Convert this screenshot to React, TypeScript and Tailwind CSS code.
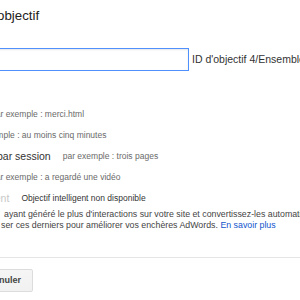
export default function App() {
  return (
    <div className="w-[300px] h-[300px] overflow-hidden bg-white font-['Liberation_Sans',Arial,sans-serif] text-[#333]">
      {/* page heading, cut by the left edge */}
      <div className="mt-[8px] leading-[16px] text-[13.3px] text-[#222] whitespace-nowrap">
        <span className="-ml-[3px] inline-block">objectif</span>
      </div>

      {/* goal name input + goal id */}
      <div className="mt-[24px] flex items-center whitespace-nowrap">
        <div className="-ml-[10px] shrink-0 w-[199px] h-[23px] border border-[#4d90fe] bg-white shadow-[inset_0_1px_2px_rgba(0,0,0,0.1)]" />
        <span className="ml-[3px] shrink-0 text-[10.5px] text-[#333]">ID d'objectif 4/Ensemble d'objectifs 1</span>
      </div>

      {/* goal types */}
      <div className="mt-[33px] text-[8.5px] whitespace-nowrap">
        <div className="h-[21px] flex items-center text-[#6a6a6a]">
          <span className="-ml-[9px]">par exemple : merci.html</span>
        </div>
        <div className="h-[21px] flex items-center text-[#6a6a6a]">
          <span className="-ml-[32px]">par exemple : au moins cinq minutes</span>
        </div>
        <div className="h-[21px] flex items-center">
          <span className="-ml-[3px] text-[10.5px] text-[#333]">par session</span>
          <span className="ml-[12px] text-[#6a6a6a]">par exemple : trois pages</span>
        </div>
        <div className="h-[21px] flex items-center text-[#6a6a6a]">
          <span className="-ml-[9px]">par exemple : a regardé une vidéo</span>
        </div>
        <div className="h-[21px] flex items-center">
          <span className="-ml-[35px] text-[10.5px] text-[#c8c8c8]">intelligent</span>
          <span className="ml-[12px] text-[#333]">Objectif intelligent non disponible</span>
        </div>
      </div>

      <div className="text-[8.8px] leading-[11px] text-[#444] whitespace-nowrap">
        <div className="ml-[4px]">ayant généré le plus d'interactions sur votre site et convertissez-les automatiquement</div>
        <div className="ml-[1px]">
          ser ces derniers pour améliorer vos enchères AdWords.{' '}
          <span className="text-[#15c]">En savoir plus</span>
        </div>
      </div>

      <div className="mt-[26px] border-t border-[#e5e5e5]" />

      <div className="mt-[11px] flex">
        <button className="-ml-[25px] h-[23px] px-[11px] rounded-[2px] border border-[#dcdcdc] bg-gradient-to-b from-[#f5f5f5] to-[#f1f1f1] text-[9px] font-bold text-[#444]">
          Annuler
        </button>
      </div>
    </div>
  );
}
